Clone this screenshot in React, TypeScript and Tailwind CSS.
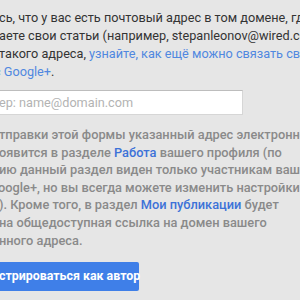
const link = 'text-[#5088e0]'

function Line({ children, shift = 0 }: { children: React.ReactNode; shift?: number }) {
  return (
    <div className="whitespace-nowrap" style={shift ? { marginLeft: shift } : undefined}>
      {children}
    </div>
  )
}

export default function App() {
  return (
    <div className="w-[300px] h-[300px] overflow-hidden bg-[#e6e6e6] font-['Roboto','Liberation_Sans',sans-serif]">
      {/* intro paragraph */}
      <div className="pt-[9px] text-[12.7px] leading-[18px] text-[#333]">
        <Line shift={-1}>сь, что у вас есть почтовый адрес в том домене, где</Line>
        <Line shift={-1}>аете свои статьи (например, stepanleonov@wired.com).</Line>
        <Line shift={-1}>
          такого адреса, <span className={link}>узнайте, как ещё можно связать свои</span>
        </Line>
        <Line shift={-6}>
          <span className={link}>с Google+</span>.
        </Line>
      </div>

      {/* email field */}
      <div className="mt-[9px] ml-[-10px] w-[253px] h-[25px] bg-white border border-[#d6d6d6] border-t-[#bdbdbd] flex items-center">
        <span className="pl-[8px] text-[12.7px] text-[#b3b3b3] whitespace-nowrap">ер: name@domain.com</span>
      </div>

      {/* notice */}
      <div className="mt-[11px] text-[12.8px] leading-[17.6px] font-medium text-[#8a8a8a]">
        <Line shift={-1}>тправки этой формы указанный адрес электронной</Line>
        <Line shift={-1}>
          оявится в разделе <span className="text-[#3d72d8]">Работа</span> вашего профиля (по
        </Line>
        <Line shift={-1}>ию данный раздел виден только участникам вашего</Line>
        <Line shift={-2}>oogle+, но вы всегда можете изменить настройки</Line>
        <Line shift={-1}>
          ). Кроме того, в раздел <span className="text-[#3d72d8]">Мои публикации</span> будет
        </Line>
        <Line shift={-1}>на общедоступная ссылка на домен вашего</Line>
        <Line shift={-1}>нного адреса.</Line>
      </div>

      <div className="mt-[13px] ml-[-10px] w-[149px] h-[29px] rounded-[2px] bg-[#3f7fe8] flex items-center">
        <span className="pl-[9px] text-[12.4px] font-bold text-white whitespace-nowrap">стрироваться как автор</span>
      </div>
    </div>
  )
}
